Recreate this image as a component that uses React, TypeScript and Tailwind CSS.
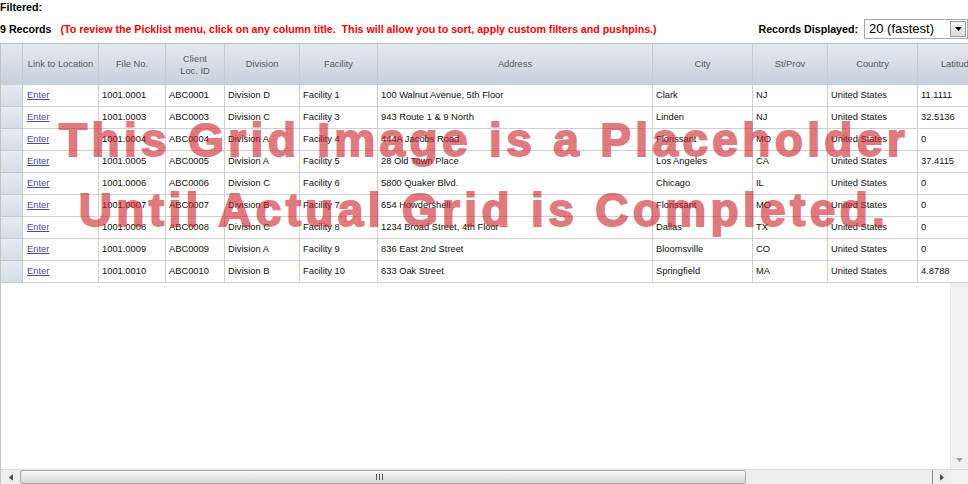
import React from "react";

const rows = [
  ["1001.0001", "ABC0001", "Division D", "Facility 1", "100 Walnut Avenue, 5th Floor", "Clark", "NJ", "United States", "11.1111"],
  ["1001.0003", "ABC0003", "Division C", "Facility 3", "943 Route 1 & 9 North", "Linden", "NJ", "United States", "32.5136"],
  ["1001.0004", "ABC0004", "Division A", "Facility 4", "444A Jacobs Road", "Florissant", "MO", "United States", "0"],
  ["1001.0005", "ABC0005", "Division A", "Facility 5", "28 Old Town Place", "Los Angeles", "CA", "United States", "37.4115"],
  ["1001.0006", "ABC0006", "Division C", "Facility 6", "5800 Quaker Blvd.", "Chicago", "IL", "United States", "0"],
  ["1001.0007", "ABC0007", "Division B", "Facility 7", "654 Howdershell", "Florissant", "MO", "United States", "0"],
  ["1001.0008", "ABC0008", "Division C", "Facility 8", "1234 Broad Street, 4th Floor", "Dallas", "TX", "United States", "0"],
  ["1001.0009", "ABC0009", "Division A", "Facility 9", "836 East 2nd Street", "Bloomsville", "CO", "United States", "0"],
  ["1001.0010", "ABC0010", "Division B", "Facility 10", "633 Oak Street", "Springfield", "MA", "United States", "4.8788"],
];

const headers: React.ReactNode[] = [
  "Link to Location",
  "File No.",
  <span key="c" className="leading-[12px]">Client<br />Loc. ID</span>,
  "Division",
  "Facility",
  "Address",
  "City",
  "St/Prov",
  "Country",
  "Latitude",
];

const cols = "grid grid-cols-[22px_76px_67px_59px_75px_78px_275px_100px_75px_90px_80px] w-[997px]";

export default function App() {
  return (
    <div className="relative w-[968px] h-[484px] overflow-hidden bg-white font-['Liberation_Sans',Arial,sans-serif] text-[10.67px] text-[#111] flex flex-col">
      <div className="h-[14px] leading-[14px] font-bold text-black">Filtered:</div>
      <div className="h-[29px] flex items-center justify-between">
        <div className="flex items-center font-bold">
          <span className="text-black">9 Records</span>
          <span className="ml-[9px] text-[#ff0000]">(To review the Picklist menu, click on any column title.&nbsp; This will allow you to sort, apply custom filters and pushpins.)</span>
        </div>
        <div className="flex items-center">
          <span className="font-bold text-black mr-[6px]">Records Displayed:</span>
          <div className="w-[104px] h-[20px] border border-[#a5acb5] flex items-center justify-between bg-white">
            <span className="text-[13px] pl-[4px] leading-none text-black">20 (fastest)</span>
            <div className="w-[16px] h-[16px] mr-[1px] border border-[#9a9a9a] bg-gradient-to-b from-[#f6f6f6] to-[#dcdcdc] flex items-center justify-center">
              <svg width="7" height="4" viewBox="0 0 7 4"><path d="M0 0h7L3.5 4z" fill="#000" /></svg>
            </div>
          </div>
        </div>
      </div>

      <div className="flex-1 flex flex-col border-l border-[#c4c4c4] overflow-hidden text-[9.33px]">
        <div className={`${cols} h-[42px] border-t border-[#b9c2cc]`}>
          <div className="bg-gradient-to-b from-[#e3e9f0] to-[#c6d0dc] border-r border-[#c7ccd3]" />
          {headers.map((h, i) => (
            <div key={i} className="bg-gradient-to-b from-[#e3e9f0] to-[#c6d0dc] border-r border-[#c7ccd3] flex items-center justify-center text-center text-[#5a5a5a] whitespace-nowrap">
              {h}
            </div>
          ))}
        </div>
        {rows.map((r, ri) => (
          <div key={ri} className={`${cols} h-[22px]`}>
            <div className="bg-gradient-to-b from-[#e6ebf1] to-[#d5dde7] border-r border-b border-[#c3c8cf]" />
            <div className="border-r border-b border-[#d0d0d0] flex items-center pl-[4px] pt-[1px]">
              <span className="text-[#4b4bab] underline">Enter</span>
            </div>
            {r.map((c, ci) => (
              <div key={ci} className="border-r border-b border-[#d0d0d0] flex items-center pl-[3px] pt-[1px] whitespace-nowrap overflow-hidden">
                {c}
              </div>
            ))}
          </div>
        ))}
        <div className="flex-1 flex">
          <div className="flex-1" />
          <div className="w-[18px] bg-[#f0f0f0] border-l border-[#e6e6e6] flex flex-col justify-end items-center pb-[7px]">
            <svg width="7" height="4" viewBox="0 0 7 4"><path d="M0 0h7L3.5 4z" fill="#a0a0a0" /></svg>
          </div>
        </div>
        <div className="h-[15px] flex bg-[#eeeeee] border-t border-[#dcdcdc]">
          <div className="w-[19px] flex items-center justify-center">
            <svg width="4" height="7" viewBox="0 0 4 7"><path d="M4 0v7L0 3.5z" fill="#505050" /></svg>
          </div>
          <div className="w-[726px] h-[14px] rounded-[2px] border border-[#a9a9a9] bg-gradient-to-b from-[#f7f7f7] to-[#d6d6d6] flex items-center justify-end pr-[362px]">
            <svg width="7" height="6" viewBox="0 0 7 6"><path d="M0.5 0v6M3.5 0v6M6.5 0v6" stroke="#555" strokeWidth="1" /></svg>
          </div>
          <div className="flex-1" />
          <div className="w-[18px] border-l border-[#8a8a8a] flex items-center justify-center">
            <svg width="4" height="7" viewBox="0 0 4 7"><path d="M0 0v7L4 3.5z" fill="#505050" /></svg>
          </div>
          <div className="w-[18px] bg-[#f0f0f0]" />
        </div>
      </div>

      <div className="absolute left-0 top-[105px] w-[968px] text-center opacity-60 pointer-events-none">
        <div className="text-[46px] leading-[70px] font-bold tracking-[4.35px] text-[#cc2229] [-webkit-text-stroke:1.8px_#cc2229] whitespace-nowrap">
          This Grid Image is a Placeholder
          <br />
          Until Actual Grid is Completed.
        </div>
      </div>
    </div>
  );
}
